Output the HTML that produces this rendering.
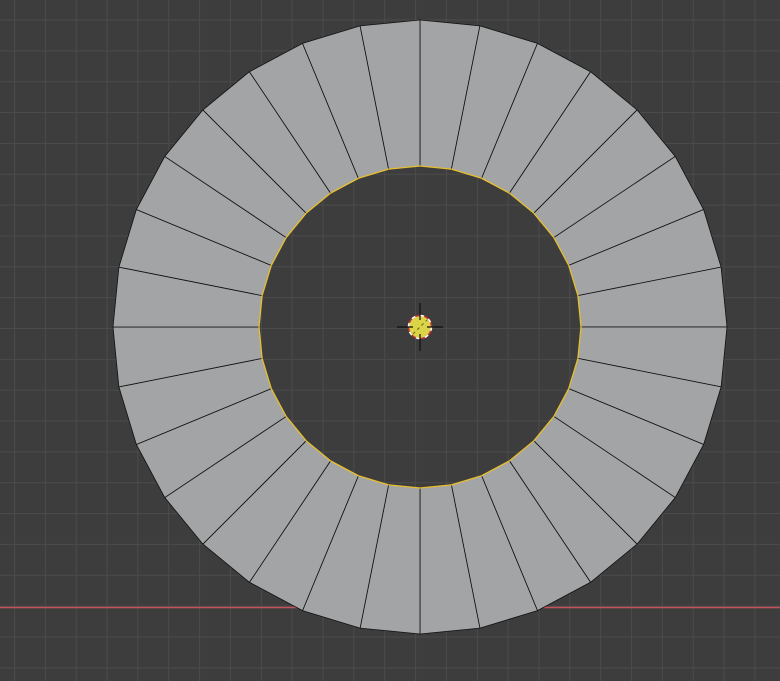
<!DOCTYPE html>
<html><head><style>
html,body{margin:0;padding:0;background:#3d3d3d;width:780px;height:681px;overflow:hidden}
svg{display:block}
</style></head><body>
<svg width="780" height="681" viewBox="0 0 780 681" xmlns="http://www.w3.org/2000/svg">
<defs>
<pattern id="g" x="14" y="19.5" width="30.85" height="30.85" patternUnits="userSpaceOnUse">
<path d="M0.5 0V30.85M0 0.5H30.85" stroke="#4b4b4b" stroke-width="1" fill="none"/>
</pattern>
<path id="q" d="M0 -307 L59.89 -301.10 L31.41 -157.91 L0 -161 Z" fill="#a3a4a5" stroke="#111" stroke-width="0.8" stroke-linejoin="round"/>
<path id="y" d="M0 -161 L31.41 -157.91" stroke="#e8c030" stroke-width="1.3" fill="none"/>
</defs>
<rect width="780" height="681" fill="#3d3d3d"/>
<rect width="780" height="681" fill="url(#g)"/>
<line x1="0" y1="607.5" x2="780" y2="607.5" stroke="#c4525a" stroke-width="1.5"/>
<g transform="translate(420 327)">
<use href="#q" transform="rotate(0)"/><use href="#q" transform="rotate(11.25)"/><use href="#q" transform="rotate(22.5)"/><use href="#q" transform="rotate(33.75)"/>
<use href="#q" transform="rotate(45)"/><use href="#q" transform="rotate(56.25)"/><use href="#q" transform="rotate(67.5)"/><use href="#q" transform="rotate(78.75)"/>
<use href="#q" transform="rotate(90)"/><use href="#q" transform="rotate(101.25)"/><use href="#q" transform="rotate(112.5)"/><use href="#q" transform="rotate(123.75)"/>
<use href="#q" transform="rotate(135)"/><use href="#q" transform="rotate(146.25)"/><use href="#q" transform="rotate(157.5)"/><use href="#q" transform="rotate(168.75)"/>
<use href="#q" transform="rotate(180)"/><use href="#q" transform="rotate(191.25)"/><use href="#q" transform="rotate(202.5)"/><use href="#q" transform="rotate(213.75)"/>
<use href="#q" transform="rotate(225)"/><use href="#q" transform="rotate(236.25)"/><use href="#q" transform="rotate(247.5)"/><use href="#q" transform="rotate(258.75)"/>
<use href="#q" transform="rotate(270)"/><use href="#q" transform="rotate(281.25)"/><use href="#q" transform="rotate(292.5)"/><use href="#q" transform="rotate(303.75)"/>
<use href="#q" transform="rotate(315)"/><use href="#q" transform="rotate(326.25)"/><use href="#q" transform="rotate(337.5)"/><use href="#q" transform="rotate(348.75)"/>
<use href="#y" transform="rotate(0)"/><use href="#y" transform="rotate(11.25)"/><use href="#y" transform="rotate(22.5)"/><use href="#y" transform="rotate(33.75)"/>
<use href="#y" transform="rotate(45)"/><use href="#y" transform="rotate(56.25)"/><use href="#y" transform="rotate(67.5)"/><use href="#y" transform="rotate(78.75)"/>
<use href="#y" transform="rotate(90)"/><use href="#y" transform="rotate(101.25)"/><use href="#y" transform="rotate(112.5)"/><use href="#y" transform="rotate(123.75)"/>
<use href="#y" transform="rotate(135)"/><use href="#y" transform="rotate(146.25)"/><use href="#y" transform="rotate(157.5)"/><use href="#y" transform="rotate(168.75)"/>
<use href="#y" transform="rotate(180)"/><use href="#y" transform="rotate(191.25)"/><use href="#y" transform="rotate(202.5)"/><use href="#y" transform="rotate(213.75)"/>
<use href="#y" transform="rotate(225)"/><use href="#y" transform="rotate(236.25)"/><use href="#y" transform="rotate(247.5)"/><use href="#y" transform="rotate(258.75)"/>
<use href="#y" transform="rotate(270)"/><use href="#y" transform="rotate(281.25)"/><use href="#y" transform="rotate(292.5)"/><use href="#y" transform="rotate(303.75)"/>
<use href="#y" transform="rotate(315)"/><use href="#y" transform="rotate(326.25)"/><use href="#y" transform="rotate(337.5)"/><use href="#y" transform="rotate(348.75)"/>
<!-- 3D cursor / origin -->
<circle r="11.5" fill="#dcd448"/>
<circle r="11.5" fill="none" stroke="#c03030" stroke-width="1.5"/>
<circle r="11.5" fill="none" stroke="#ffffff" stroke-width="1.5" stroke-dasharray="4 5"/>
<path d="M-23 0H-7M7 0H23M0 -24V-7M0 7V24" stroke="#111" stroke-width="1.2"/>
<path d="M-7 7L7 -7" stroke="#6a6420" stroke-width="1" stroke-dasharray="3 3"/>
</g>
</svg>
</body></html>
